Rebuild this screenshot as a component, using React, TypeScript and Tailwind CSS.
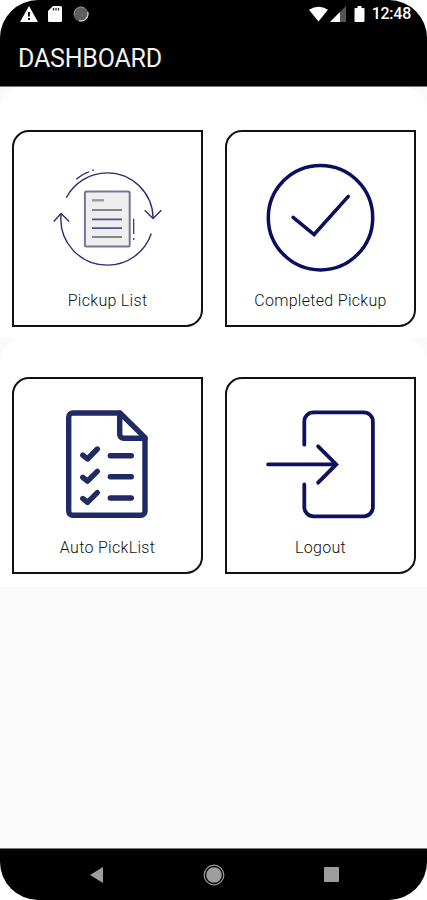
import type { ReactNode } from "react";

function PickupIcon() {
  return (
    <svg viewBox="0.5 0.5 110 110" fill="none" stroke="#2b2d70" strokeWidth={1.4} className="size-[110px]">
      <path d="M13.8 35.2A46.2 46.2 0 0 1 54.7 10.4 46 46 0 0 1 100.6 55.5M98.8 71A46.2 46.2 0 0 1 54.7 102.6 46.2 46.2 0 0 1 8.6 51.5" />
      <path d="M92.2 47.8 100.6 56l8.2-8.2M1.2 59l7.4-8 8.1 8" />
      <path d="M23.8 16.8Q29.5 11.500 36.8 9.200M39.8 8l1.600-.6M81.200 56.200v15.300M81.200 75.400v2.200" strokeWidth={1.2} />
      <rect x="32.4" y="28.9" width="44.8" height="55" rx="1.5" fill="#eeeeef" stroke="#767692" strokeWidth={2} />
      <path d="M39.5 37.8h12" stroke="#9a9aa4" strokeWidth={2.4} />
      <path d="M39.5 47.5h30M39.5 74.5h30" stroke="#85858f" strokeWidth={1.8} />
      <path d="M39.5 56.8h30M39.5 65.7h30" stroke="#50508a" strokeWidth={1.8} />
    </svg>
  );
}

function CompletedIcon() {
  return (
    <svg
      viewBox="0.5 0.5 110 110"
      fill="none"
      stroke="#0b0e5c"
      strokeWidth={3.5}
      strokeLinecap="round"
      className="size-[110px]"
    >
      <circle cx="55" cy="55.2" r="52.2" />
      <path d="m27.6 54.8 21 17.2 34.200-38.200" />
    </svg>
  );
}

function PickListIcon() {
  return (
    <svg
      viewBox="0.5 0.5 110 110"
      fill="none"
      stroke="#202a63"
      strokeWidth={5.4}
      strokeLinecap="round"
      strokeLinejoin="round"
      className="size-[110px]"
    >
      <path d="M67.5 3.5H20.2a4 4 0 0 0-4 4v94.3a4 4 0 0 0 4 4h68.3a4 4 0 0 0 4-4V28.2Z" />
      <path d="M67.200 3.500v21.200a4 4 0 0 0 4 4h21.300" />
      <path d="m30.300 45.600 4.700 3.900 9.800-10M30.300 67.800l4.700 3.900 9.800-9.800M30.300 89l4.700 3.900 9.800-9.800" />
      <path d="M57.800 46.200h21M57.800 67.300h21M57.800 88.500h21" />
    </svg>
  );
}

function LogoutIcon() {
  return (
    <svg
      viewBox="0.5 0.5 110 110"
      fill="none"
      stroke="#0e125c"
      strokeWidth={3.8}
      strokeLinecap="round"
      className="size-[110px]"
    >
      <path d="M38.8 35.2V12a9.2 9.2 0 0 1 9.2-9.2h50.2a9.2 9.2 0 0 1 9.2 9.2v85.600a9.200 9.200 0 0 1-9.200 9.200H48a9.200 9.200 0 0 1-9.200-9.200V75" />
      <path d="M2.600 54.900h68.200M52.600 36.800l18.200 18.100-18.200 18.300" />
    </svg>
  );
}

function Card({ label, children }: { label: string; children: ReactNode }) {
  return (
    <div className="flex h-[197px] w-[191px] flex-col items-center rounded-tl-[17px] rounded-br-[17px] border-2 border-[#111] bg-white pt-[31px]">
      {children}
      <span className="mt-[17px] text-[16px] leading-[22px] font-light tracking-[0.3px] text-[#111]">{label}</span>
    </div>
  );
}

function StatusBar() {
  return (
    <div className="flex h-7 items-center justify-between pr-4 pl-5 text-white">
      <div className="flex items-center gap-[10px]">
        <svg viewBox="0 0 18 16" className="h-4 w-[18px]">
          <path d="M9 0 18 16H0Z" fill="currentColor" />
          <path d="M9 6v4.5M9 12v2" stroke="#000" strokeWidth={1.8} />
        </svg>
        <svg viewBox="0 0 14 16" className="h-4 w-[14px]">
          <path d="M5 0h7.5A1.5 1.5 0 0 1 14 1.5v13a1.5 1.5 0 0 1-1.5 1.5h-11A1.5 1.5 0 0 1 0 14.5V5Z" fill="currentColor" />
          <path d="M5.5 2v2.6M8 2v2.6M10.5 2v2.6" stroke="#222" strokeWidth={1.3} />
        </svg>
        <svg viewBox="0 0 16 16" className="ml-px size-4">
          <circle cx="8" cy="8" r="7.5" fill="#5e5e5e" />
          <path d="M1.200 9a7 7 0 0 1 9.800-7.300" stroke="#8c8c8c" fill="none" />
          <path d="M14.700 6a7 7 0 0 1-8.700 8.600" stroke="#ccc" strokeWidth={1.3} fill="none" />
        </svg>
      </div>
      <div className="flex items-center">
        <svg viewBox="0 0 20 16" className="h-4 w-[19px]">
          <path d="M0 3.500Q10-3 20 3.500L10 16Z" fill="currentColor" />
        </svg>
        <svg viewBox="0 0 16 16" className="ml-[2px] size-4">
          <path d="M16 0v16H0Z" fill="#555" />
          <path d="M10 6v10H0Z" fill="currentColor" />
        </svg>
        <svg viewBox="0 0 10 16" className="ml-[8px] h-4 w-[11px]">
          <path d="M3 0h4v2h2a1 1 0 0 1 1 1v12a1 1 0 0 1-1 1H1a1 1 0 0 1-1-1V3a1 1 0 0 1 1-1h2Z" fill="currentColor" />
        </svg>
        <span className="ml-[7px] text-[16px] leading-4 font-medium tracking-[-0.25px]">12:48</span>
      </div>
    </div>
  );
}

export default function App() {
  return (
    <div className="flex h-[900px] w-[427px] flex-col overflow-hidden bg-white font-['Roboto',sans-serif]">
      <header className="h-[87px] rounded-t-[38px] border-b border-[#777] bg-black">
        <StatusBar />
        <h1 className="pt-[15px] pl-[18px] text-[25px] leading-8 tracking-[-0.2px] text-[#f2f2f2]">DASHBOARD</h1>
      </header>

      <main className="flex-1 bg-[#fafafa]">
        <div className="flex h-[251px] justify-between rounded-t-[24px] bg-white pt-[43px] pr-[11px] pl-3">
          <Card label="Pickup List">
            <PickupIcon />
          </Card>
          <Card label="Completed Pickup">
            <CompletedIcon />
          </Card>
        </div>
        <div className="flex h-[249px] justify-between rounded-t-[24px] bg-white pt-[39px] pr-[11px] pl-3">
          <Card label="Auto PickList">
            <PickListIcon />
          </Card>
          <Card label="Logout">
            <LogoutIcon />
          </Card>
        </div>
      </main>

      {/* Android navigation bar */}
      <nav className="flex h-[52px] items-center justify-between rounded-b-[38px] border-t border-[#777] bg-black pr-[88px] pl-[90px] text-[#9d9d9d]">
        <svg viewBox="0 0 13 16" className="h-4 w-[13px]">
          <path d="M13 0v16L0 8Z" fill="currentColor" />
        </svg>
        <svg viewBox="0 0 22 22" className="size-[22px]">
          <circle cx="11" cy="11" r="9.8" fill="none" stroke="currentColor" strokeWidth={1.2} />
          <circle cx="11" cy="11" r="7.8" fill="currentColor" />
        </svg>
        <svg viewBox="0 0 15 15" className="size-[15px]">
          <rect width="15" height="15" rx="1" fill="currentColor" />
        </svg>
      </nav>
    </div>
  );
}
